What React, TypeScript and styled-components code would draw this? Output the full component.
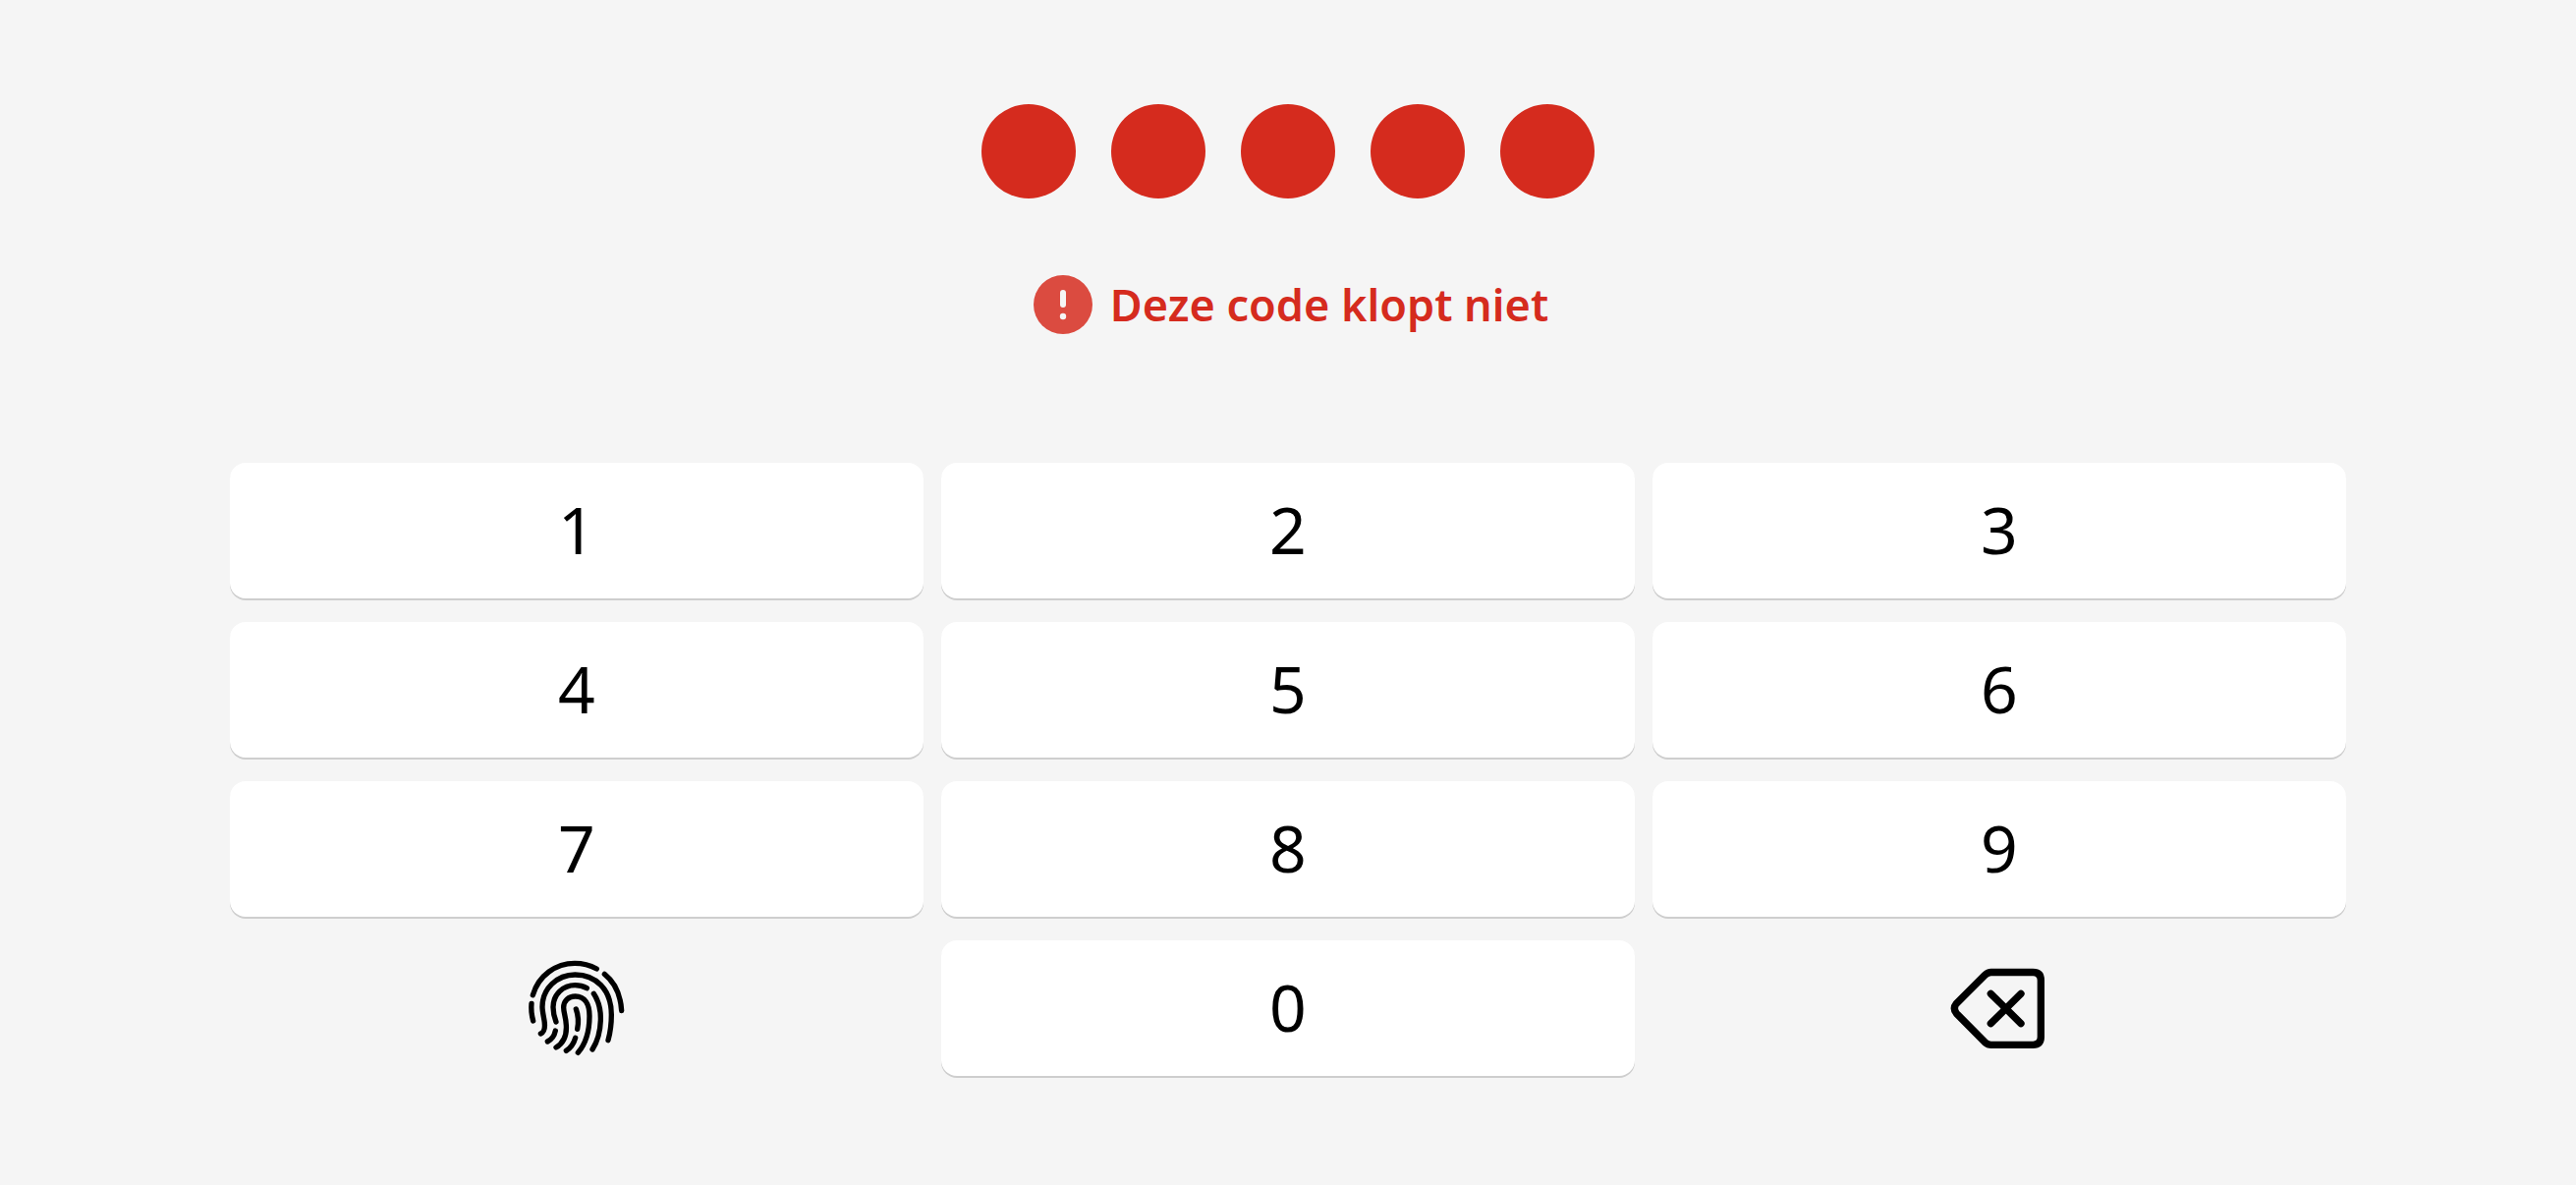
import React from "react";
import styled, { createGlobalStyle } from "styled-components";

const GlobalStyle = createGlobalStyle`
  *, *::before, *::after { box-sizing: border-box; }
  body {
    margin: 0;
    background: #f5f5f5;
    color: #000;
    font-family: "Noto Sans", "Open Sans", sans-serif;
  }
`;

const Screen = styled.main`
  display: flex;
  flex-direction: column;
  padding: 106px 234px 108px;
`;

const PinDots = styled.div`
  display: flex;
  justify-content: center;
  gap: 36px;
`;

const Dot = styled.span`
  width: 96px;
  height: 96px;
  border-radius: 50%;
  background: #d52b1e;
`;

const ErrorMessage = styled.p`
  display: flex;
  align-items: center;
  justify-content: center;
  gap: 18px;
  margin: 78px 0 131px;
  padding-left: 6px;
  color: #d52b1e;
  font-size: 45px;
  font-weight: 600;
  line-height: 58px;
`;

const ErrorIcon = styled.svg`
  flex: none;
  width: 60px;
  height: 60px;
`;

const Keypad = styled.div`
  display: grid;
  grid-template-columns: repeat(3, 1fr);
  gap: 24px 18px;
`;

const Key = styled.button<{ $plain?: boolean }>`
  display: flex;
  align-items: center;
  justify-content: center;
  height: 138px;
  padding: ${(p) => (p.$plain ? "0" : "0 0 4px")};
  border: 0;
  border-radius: 16px;
  background: ${(p) => (p.$plain ? "transparent" : "#fff")};
  box-shadow: ${(p) => (p.$plain ? "none" : "0 2px 0 #cecece")};
  color: #000;
  font-family: inherit;
  font-size: 66px;
  line-height: 90px;
  cursor: pointer;
`;

const KeyIcon = styled.svg`
  width: 102px;
  height: 102px;
  fill: none;
  stroke: currentColor;
  stroke-linecap: round;
  stroke-linejoin: round;
`;

const FINGERPRINT_RIDGES = [
  "M67 158C85 98 137 61 195 61C219 61 242 67 262 78",
  "M286 94C316 118 335 155 338 206",
  "M63 184C61 203 64 222 68 237",
  "M91 276C105 270 105 255 102 236C99 218 96 205 96 194C96 139 141 96 196 96C259 96 307 141 307 218C307 248 303 274 297 296",
  "M138 240C132 224 129 210 129 195C129 156 160 128 196 128C209 128 221 131 232 137",
  "M253 154C267 175 275 205 274 235C273 270 264 300 249 324",
  "M138 318C162 304 171 282 169 250C168 226 161 212 161 196C161 175 177 162 197 162C225 162 240 185 240 222C240 270 230 305 205 334",
  "M199 201C206 220 207 242 203 262",
  "M197 289C192 306 183 320 169 328",
  "M136 267C133 282 124 294 112 300",
];

const DIGITS = ["1", "2", "3", "4", "5", "6", "7", "8", "9"];
const PIN_LENGTH = 5;

export default function App() {
  return (
    <>
      <GlobalStyle />
      <Screen>
        <PinDots>
          {Array.from({ length: PIN_LENGTH }, (_, i) => (
            <Dot key={i} />
          ))}
        </PinDots>
        <ErrorMessage role="alert">
          <ErrorIcon viewBox="0 0 60 60" aria-hidden="true">
            <circle cx="30" cy="30" r="30" fill="#db4b40" />
            <path d="M30 18v12" stroke="#f5f5f5" strokeWidth="6" strokeLinecap="round" />
            <circle cx="30" cy="42" r="3.2" fill="#f5f5f5" />
          </ErrorIcon>
          Deze code klopt niet
        </ErrorMessage>
        <Keypad>
          {DIGITS.map((digit) => (
            <Key key={digit} type="button">
              {digit}
            </Key>
          ))}
          <Key type="button" $plain aria-label="Vingerafdruk">
            <KeyIcon viewBox="48 45 306 306" strokeWidth="16" aria-hidden="true">
              {FINGERPRINT_RIDGES.map((d) => (
                <path key={d} d={d} />
              ))}
            </KeyIcon>
          </Key>
          <Key type="button">0</Key>
          <Key type="button" $plain aria-label="Wissen">
            <KeyIcon viewBox="42 15 306 306" strokeWidth="22" aria-hidden="true">
              <path d="M170 58.5H298Q322 58.5 322 83V256Q322 280 298 280H170Q160 280 151 272L64 184Q52 169 64 154L151 67Q160 58.5 170 58.5Z" />
              <path d="M169 124L261 215M261 124L169 215" />
            </KeyIcon>
          </Key>
        </Keypad>
      </Screen>
    </>
  );
}
